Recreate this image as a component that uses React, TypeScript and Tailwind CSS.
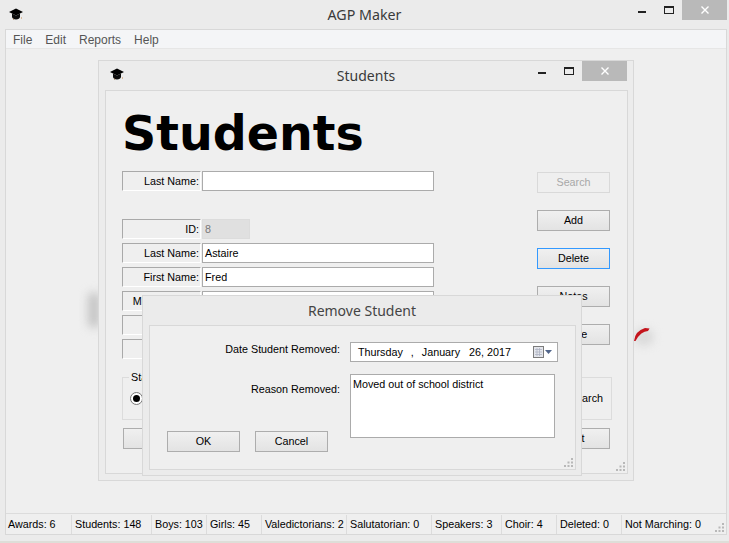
import React from 'react';

const uiFont = "font-['Liberation_Sans',Arial,sans-serif]";

function CapIcon({ className }: { className?: string }) {
  return (
    <svg viewBox="0 0 14 11" className={className}>
      <path d="M7 0 L14 3.500 L7 7 L0 3.500 Z" fill="#000" />
      <path d="M3 5 L3 8.500 Q3.500 10.500 7 11 Q10.500 10.500 11 8.500 L11 5 L7 7 Z" fill="#0c0c0c" />
      <rect x="12" y="9" width="1" height="1" fill="#c98a4a" />
      <rect x="4" y="10" width="1" height="1" fill="#8a5a2a" />
    </svg>
  );
}

function WinButtons() {
  return (
    <div className="flex items-start">
      <div className="w-[8px] h-[2px] bg-[#222] mt-[11px]" />
      <div className="w-[10px] h-[8px] border border-[#222] border-t-2 mt-[6px] ml-[18px]" />
      <div className="w-[45px] h-[20px] bg-[#b9b9b9] ml-[8px] flex items-center justify-center">
        <svg viewBox="0 0 8 8" className="w-[8px] h-[8px]">
          <path d="M0.500 0.500 L7.500 7.500 M7.500 0.500 L0.500 7.500" stroke="#fff" strokeWidth="1.4" />
        </svg>
      </div>
    </div>
  );
}

function Grip({ className }: { className?: string }) {
  return (
    <svg viewBox="0 0 10 10" className={className}>
      <path d="M7 0h2v2h-2zM3.500 3.500h2v2h-2zM7 3.500h2v2h-2zM0 7h2v2h-2zM3.500 7h2v2h-2zM7 7h2v2h-2z" fill="#b8b8b8" />
    </svg>
  );
}

function FieldRow({ label, value, disabled, width = 'w-[232px]', mt }: { label: string; value?: string; disabled?: boolean; width?: string; mt: string }) {
  return (
    <div className={`flex gap-[1px] ${mt}`}>
      <div className="w-[79px] h-[20px] border-t border-l border-t-[#a9a9a9] border-l-[#a9a9a9] border-b border-b-white border-r border-r-white text-right pr-[1px] text-[10.75px] leading-[18px] text-black whitespace-nowrap">
        {label}
      </div>
      <div className={`${width} h-[20px] border text-[10.75px] leading-[18px] px-[2px] ${disabled ? 'bg-[#e0e0e0] border-[#dcdcdc] text-[#7a7a7a]' : 'bg-white border-[#ababab] text-black'}`}>
        {value}
      </div>
    </div>
  );
}

function Btn({ label, className = '', focus, disabled }: { label: string; className?: string; focus?: boolean; disabled?: boolean }) {
  const border = focus ? 'border-[#3399ff]' : disabled ? 'border-[#d9d9d9]' : 'border-[#adadad]';
  const bg = disabled ? 'bg-[#efefef] text-[#a8a8a8]' : 'bg-gradient-to-b from-[#f0f0f0] to-[#e3e3e3] text-black';
  return (
    <div className={`w-[73px] h-[21px] border ${border} ${bg} text-[10.75px] leading-[19px] text-center ${className}`}>{label}</div>
  );
}

function StudentsWindow() {
  return (
    <div className="absolute left-[98px] top-[60px] w-[536px] h-[421px] border border-[#d8d8d8] bg-[#ececec]">
      <div className="h-[29px] grid grid-cols-[1fr_auto_1fr]">
        <CapIcon className="w-[14px] h-[12px] ml-[11px] mt-[7px]" />
        <div className="font-['Noto_Sans',sans-serif] text-[14px] leading-[30px] text-[#3a3a3a]">Students</div>
        <div className="justify-self-end mr-[6px]"><WinButtons /></div>
      </div>
      <div className="relative ml-[6px] w-[523px] h-[384px] border border-[#d8d8d8] bg-[#efefef]">
        <div className="flex h-[286px]">
          <div className="pl-[16px] w-[431px]">
            <div className="h-[80px] font-['DejaVu_Sans',sans-serif] font-bold text-[47.5px] leading-[56px] text-black pt-[15px] whitespace-nowrap">Students</div>
            <FieldRow label="Last Name:" mt="mt-[0px]" />
            <FieldRow label="ID:" value="8" disabled width="w-[48px]" mt="mt-[28px]" />
            <FieldRow label="Last Name:" value="Astaire" mt="mt-[4px]" />
            <FieldRow label="First Name:" value="Fred" mt="mt-[4px]" />
            <FieldRow label="Middle Name:" mt="mt-[4px]" />
            <FieldRow label="" mt="mt-[4px]" />
            <FieldRow label="" mt="mt-[4px]" />
          </div>
          <div className="flex flex-col">
            <Btn label="Search" disabled className="mt-[81px]" />
            <Btn label="Add" className="mt-[17px]" />
            <Btn label="Delete" focus className="mt-[17px]" />
            <Btn label="Notes" className="mt-[17px]" />
            <Btn label="Close" className="mt-[17px]" />
          </div>
        </div>
        <div className="relative ml-[16px] w-[490px] h-[43px] border border-[#dcdcdc] flex items-center justify-between pl-[7px] pr-[8px] text-[10.75px]">
          <span className="absolute left-[6px] -top-[8px] bg-[#efefef] px-[2px] leading-[14px] text-black">Status</span>
          <div className="w-[13px] h-[13px] rounded-full border border-[#777] bg-white flex items-center justify-center">
            <div className="w-[7px] h-[7px] rounded-full bg-black" />
          </div>
          <span className="text-black">Search</span>
        </div>
        <div className="ml-[17px] mt-[8px] w-[487px] flex justify-between">
          <Btn label="Save" />
          <Btn label="Print" />
        </div>
        <Grip className="absolute right-[1px] bottom-[1px] w-[10px] h-[10px]" />
      </div>
    </div>
  );
}

function RemoveDialog() {
  return (
    <div className="absolute left-[142px] top-[295px] w-[440px] h-[181px] border border-[#d8d8d8] bg-[#ebebeb]">
      <div className="h-[29px] text-center font-['Noto_Sans',sans-serif] text-[14px] leading-[30px] text-[#444]">Remove Student</div>
      <div className="relative ml-[6px] w-[427px] h-[145px] border border-[#d8d8d8] bg-[#efefef] pt-[16px] text-[10.75px] text-black">
        <div className="flex">
          <div className="w-[190px] text-right leading-[14px]">Date Student Removed:</div>
          <div className="ml-[10px] w-[208px] h-[20px] border border-[#ababab] bg-white flex items-center">
            <span className="ml-[7px]">Thursday</span>
            <span className="ml-[8px]">,</span>
            <span className="ml-[8px]">January</span>
            <span className="ml-[9px]">26, 2017</span>
            <svg viewBox="0 0 20 13" className="ml-[22px] w-[20px] h-[13px]">
              <rect x="0.500" y="0.500" width="10" height="11" fill="#e4e6ec" stroke="#7c7c7c" />
              <path d="M2 3.500h7M2 6h7M2 8.500h7M4 2v8M6.500 2v8" stroke="#aeb4c4" strokeWidth="0.8" />
              <path d="M12 4 L19 4 L15.500 8 Z" fill="#51658a" />
            </svg>
          </div>
        </div>
        <div className="flex mt-[12px]">
          <div className="w-[190px]">
            <div className="text-right leading-[14px] pt-[8px]">Reason Removed:</div>
            <div className="flex gap-[15px] pl-[17px] mt-[35px]">
              <Btn label="OK" />
              <Btn label="Cancel" />
            </div>
          </div>
          <div className="ml-[10px] w-[205px] h-[64px] border border-[#ababab] bg-white leading-[14px] pl-[2px] pt-[2px]">Moved out of school district</div>
        </div>
        <Grip className="absolute right-[1px] bottom-[1px] w-[10px] h-[10px]" />
      </div>
    </div>
  );
}

const statusItems: { text: string; w: string; pl: string }[] = [
  { text: 'Awards: 6', w: 'w-[66px]', pl: 'pl-[2px]' },
  { text: 'Students: 148', w: 'w-[80px]', pl: 'pl-[3px]' },
  { text: 'Boys: 103', w: 'w-[55px]', pl: 'pl-[3px]' },
  { text: 'Girls: 45', w: 'w-[55px]', pl: 'pl-[3px]' },
  { text: 'Valedictorians: 2', w: 'w-[85px]', pl: 'pl-[3px]' },
  { text: 'Salutatorian: 0', w: 'w-[85px]', pl: 'pl-[3px]' },
  { text: 'Speakers: 3', w: 'w-[70px]', pl: 'pl-[3px]' },
  { text: 'Choir: 4', w: 'w-[55px]', pl: 'pl-[3px]' },
  { text: 'Deleted: 0', w: 'w-[65px]', pl: 'pl-[3px]' },
];

export default function App() {
  return (
    <div className={`w-[729px] h-[543px] bg-[#ebebeb] flex flex-col overflow-hidden relative ${uiFont}`}>
      <div className="h-[29px] grid grid-cols-[1fr_auto_1fr] shrink-0">
        <CapIcon className="w-[14px] h-[12px] ml-[9px] mt-[8px]" />
        <div className="font-['Noto_Sans',sans-serif] text-[14.25px] leading-[30px] text-[#3a3a3a]">AGP Maker</div>
        <div className="justify-self-end mr-[2px]"><WinButtons /></div>
      </div>
      <div className="ml-[5px] w-[722px] h-[506px] border border-[#d8d8d8] flex flex-col bg-[#efefef] shrink-0">
        <div className="h-[19px] bg-[#f4f5f7] border-b border-[#e6e6e6] flex text-[12px] leading-[20px] text-[#555] gap-[13px] pl-[7px]">
          <span>File</span><span>Edit</span><span>Reports</span><span>Help</span>
        </div>
        <div className="flex-1" />
        <div className="h-[21px] border-t border-[#dcdcdc] flex items-center text-[10.75px] text-black relative">
          {statusItems.map((s) => (
            <div key={s.text} className={`${s.w} ${s.pl} h-[19px] leading-[19px] border-r border-[#dcdcdc] whitespace-nowrap shrink-0`}>{s.text}</div>
          ))}
          <div className="pl-[3px] whitespace-nowrap">Not Marching: 0</div>
          <Grip className="absolute right-[1px] bottom-[1px] w-[10px] h-[10px]" />
        </div>
      </div>
      <div className="h-[6px] shrink-0" />
      <div className="flex-1 bg-[#deded8]" />
      <div className="absolute left-[88px] top-[292px] w-[12px] h-[36px] rounded-full bg-[#c4c4c4] blur-[5px]" />
      <div className="absolute left-[634px] top-[328px] w-[20px] h-[18px] rounded-full bg-[#dadada] blur-[4px]" />
      <svg viewBox="0 0 18 14" className="absolute left-[633px] top-[327px] w-[18px] h-[14px]">
        <path d="M1 14 Q2 4 12 1 L16.500 1.500 L15 4 Q8 4 2.500 14 Z" fill="#c4141c" />
      </svg>
      <StudentsWindow />
      <RemoveDialog />
    </div>
  );
}
